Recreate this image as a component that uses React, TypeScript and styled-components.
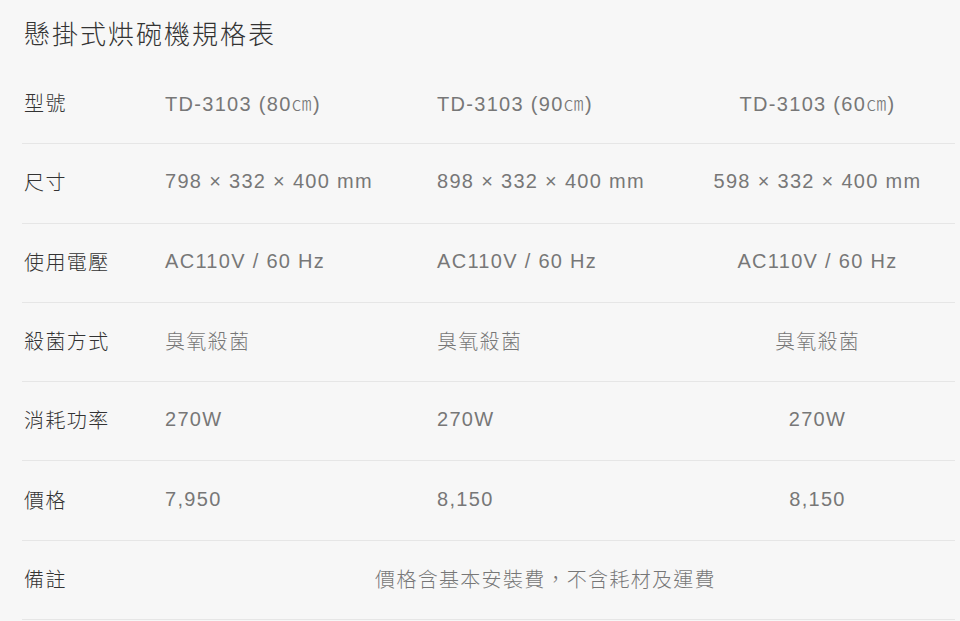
import React from "react";
import styled, { createGlobalStyle } from "styled-components";

const Global = createGlobalStyle`
  html, body { margin: 0; padding: 0; background: #f7f7f7; }
  body { font-family: "Liberation Sans", "Noto Sans CJK TC", sans-serif; }
`;

const Page = styled.div`
  width: 960px;
  height: 621px;
  padding: 0 5px 0 22px;
  box-sizing: border-box;
  background: #f7f7f7;
  overflow: hidden;
`;

const Title = styled.h1`
  margin: 0;
  height: 65px;
  display: flex;
  align-items: center;
  padding-left: 2px;
  font-size: 26px;
  font-weight: 300;
  letter-spacing: 2px;
  color: #333;
  font-family: "Liberation Sans", "Noto Sans CJK TC", sans-serif;
`;

const Table = styled.div`
  width: 933px;
  display: flex;
  flex-direction: column;
`;

const Row = styled.div`
  display: grid;
  grid-template-columns: 128px 272px 258px 1fr;
  height: 79.3px;
  box-sizing: border-box;
  border-bottom: 1px solid #e6e6e6;
  align-items: center;
`;

const Label = styled.div`
  padding-left: 2px;
  padding-bottom: 3px;
  font-size: 20px;
  font-weight: 300;
  letter-spacing: 1.4px;
  color: #333;
  white-space: nowrap;
`;

const Cell = styled.div<{ $center?: boolean; $span?: boolean }>`
  padding-left: ${(p) => (p.$center ? "0" : "15px")};
  padding-right: ${(p) => (p.$span ? "14px" : "0")};
  padding-bottom: 3px;
  text-align: ${(p) => (p.$center ? "center" : "left")};
  grid-column: ${(p) => (p.$span ? "2 / 5" : "auto")};
  font-size: 20px;
  font-weight: 300;
  letter-spacing: 1.3px;
  color: #777;
  white-space: nowrap;
`;

const rows: [string, string, string, string][] = [
  ["型號", "TD-3103 (80㎝)", "TD-3103 (90㎝)", "TD-3103 (60㎝)"],
  ["尺寸", "798 × 332 × 400 mm", "898 × 332 × 400 mm", "598 × 332 × 400 mm"],
  ["使用電壓", "AC110V / 60 Hz", "AC110V / 60 Hz", "AC110V / 60 Hz"],
  ["殺菌方式", "臭氧殺菌", "臭氧殺菌", "臭氧殺菌"],
  ["消耗功率", "270W", "270W", "270W"],
  ["價格", "7,950", "8,150", "8,150"],
];

export default function App() {
  return (
    <>
      <Global />
      <Page lang="zh-Hant-TW">
        <Title>懸掛式烘碗機規格表</Title>
        <Table>
          {rows.map((r) => (
            <Row key={r[0]}>
              <Label>{r[0]}</Label>
              <Cell>{r[1]}</Cell>
              <Cell>{r[2]}</Cell>
              <Cell $center>{r[3]}</Cell>
            </Row>
          ))}
          <Row>
            <Label>備註</Label>
            <Cell $center $span>
              價格含基本安裝費，不含耗材及運費
            </Cell>
          </Row>
        </Table>
      </Page>
    </>
  );
}
